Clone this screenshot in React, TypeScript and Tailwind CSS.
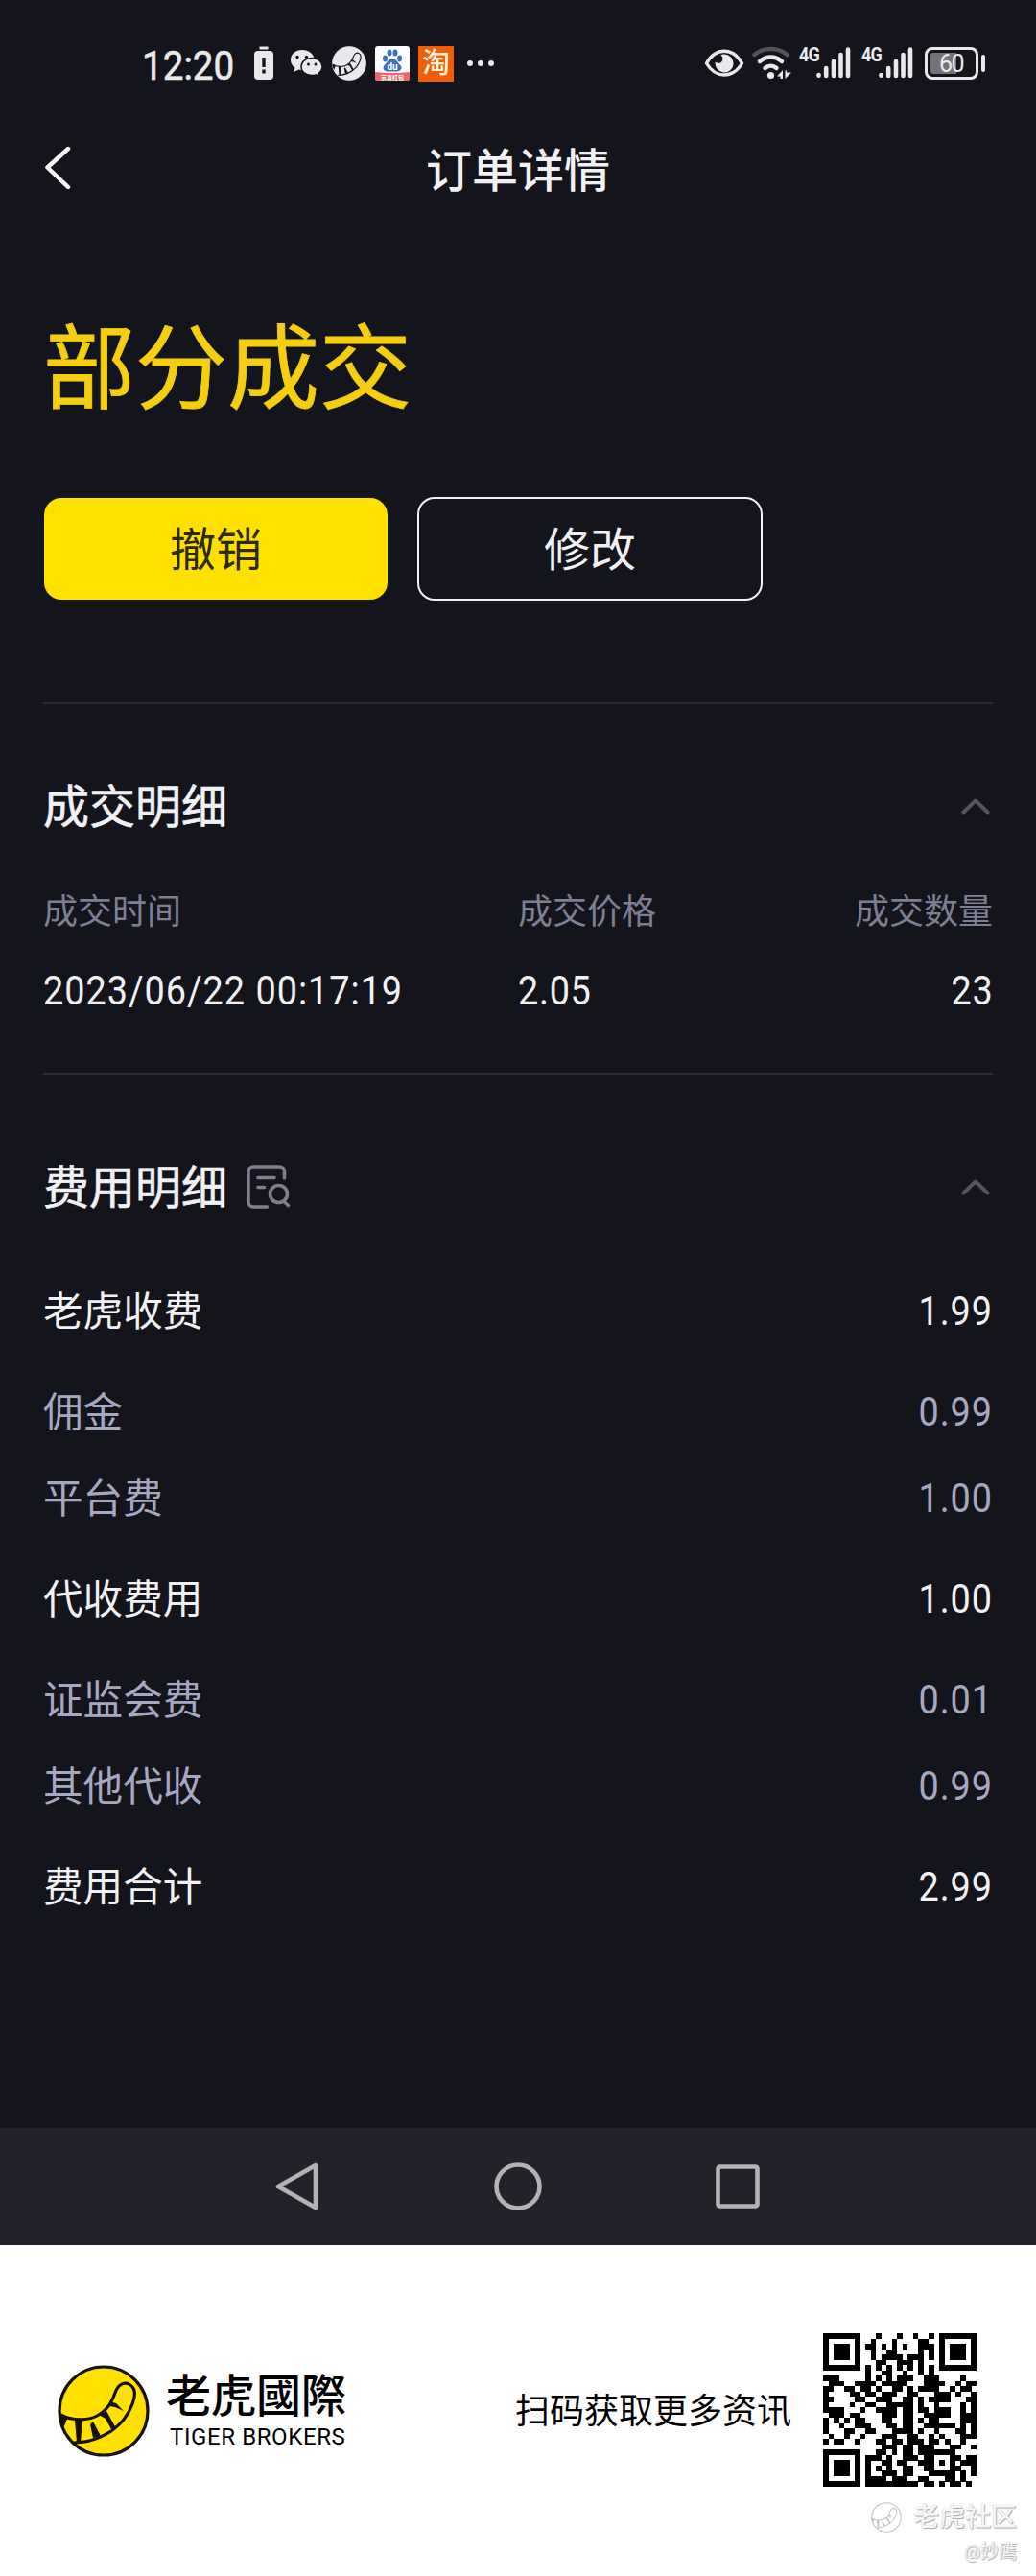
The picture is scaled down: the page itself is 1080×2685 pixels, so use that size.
import React from "react";

const CJK = "font-['Roboto','Noto_Sans_CJK_SC',sans-serif]";

function TigerTail({ size, disc, ink, outline }: { size: number; disc: string; ink: string; outline: string }) {
  return (
    <svg width={size} height={size} viewBox="0 0 96 96" fill="none" className="shrink-0">
      <circle cx="48" cy="48" r="46" fill={disc} stroke={outline} strokeWidth="3.2" />
      <path
        d="M2 52C16 58 32 59 43 52C54 45 57 37 60 29C63 20 70 17 76 21C82 25 81 33 78 41C73 54 66 62 56 69C45 76 32 81 17 81"
        stroke={ink}
        strokeWidth="3.2"
      />
      <path
        d="M1 49L11 54L6 66L2 58ZM18 57L26 57L24 81L20 81ZM37 59L45 74L37 76L34 62ZM43 52L51 48L61 66L57 69L50 56ZM54 38L61 40L69 48L60 44L54 43Z"
        fill={ink}
      />
    </svg>
  );
}

function Signal() {
  return (
    <div className="flex h-[36px] items-start">
      <span className="w-[18px] origin-left scale-x-90 text-[20px] font-bold leading-[18px] tracking-[-1px]">4G</span>
      <svg width="36" height="36" viewBox="0 0 36 36" stroke="#e9e9ec" strokeWidth="4.6" strokeLinecap="round">
        <path d="M2.5 30v.8M10.2 23v8M18 16v15M25.5 9v22M33 3.500v27.500" />
      </svg>
    </div>
  );
}

function StatusBar() {
  return (
    <header className="flex h-[132px] items-center pl-[148px] pr-[53px] text-[#e9e9ec]">
      <span className="w-[117px] pt-[5px] text-[42px] leading-none">
        <span className="inline-block origin-left scale-x-[0.92] [-webkit-text-stroke:0.6px]">12:20</span>
      </span>
      <svg width="20" height="36" viewBox="0 0 20 36" className="mr-[17px]">
        <path d="M5.500 2h9" stroke="#e9e9ec" strokeWidth="3" />
        <rect y="5" width="20" height="30" rx="4" fill="#e9e9ec" />
        <path d="M10 12v10M10 24.500v4" stroke="#14141c" strokeWidth="3.4" />
      </svg>
      <svg width="34" height="30" viewBox="0 0 34 30" className="mr-[10px]">
        <path d="M13 1C6 1 1 5.500 1 11.500c0 3.500 1.500 6 4.500 8L4 24l5.500-2.500c5 1.500 16-1 16-10C25.500 5.500 20 1 13 1Z" fill="#e9e9ec" />
        <path d="M23 9.500c-6.500 0-11 4-11 9s4.500 9 11 9c1.500 0 3-.3 4.200-.7l4.300 2-1.200-3.800c2.500-1.700 3.700-4 3.700-6.500 0-5-4.500-9-11-9Z" fill="#e9e9ec" stroke="#14141c" strokeWidth="1.4" />
        <g fill="#14141c">
          <circle cx="8" cy="8.500" r="1.700" /><circle cx="17.500" cy="8.500" r="1.700" />
          <circle cx="19.500" cy="16" r="1.500" /><circle cx="27" cy="16" r="1.500" />
        </g>
      </svg>
      <TigerTail size={36} disc="#e9e9ec" ink="#14141c" outline="#e9e9ec" />
      <svg width="36" height="36" viewBox="0 0 36 36" className="ml-[9px]">
        <rect width="36" height="36" rx="3" fill="#fff" />
        <g fill="#3f6fc4">
          <ellipse cx="10.500" cy="13" rx="2.500" ry="3.400" /><ellipse cx="15" cy="7" rx="2.500" ry="3.400" />
          <ellipse cx="21" cy="7" rx="2.500" ry="3.400" /><ellipse cx="25.500" cy="13" rx="2.500" ry="3.400" />
          <path d="M18 13c4 0 5 4 8 6.500 3 3 1 7-3 7H13c-4 0-6-4-3-7C13 17 14 13 18 13Z" />
        </g>
        <path d="M0 27Q18 29 36 27V34a2 2 0 0 1-2 2H2a2 2 0 0 1-2-2Z" fill="#e8686c" />
        <text x="18" y="24.500" fontSize="10" fontWeight="700" textAnchor="middle" fill="#fff">du</text>
        <text x="18" y="34.700" fontSize="6" fontWeight="700" textAnchor="middle" fill="#fff">京喜红包</text>
      </svg>
      <span className="ml-[9px] flex size-[37px] items-center justify-center bg-[#f25c05] text-[29px] font-medium leading-none text-[#fff3df]">淘</span>
      <span className="ml-[14px] flex gap-[5px]">
        <i className="size-[6px] rounded-full bg-[#e9e9ec]" />
        <i className="size-[6px] rounded-full bg-[#e9e9ec]" />
        <i className="size-[6px] rounded-full bg-[#e9e9ec]" />
      </span>
      <div className="ml-auto flex items-center">
        <svg width="42" height="30" viewBox="0 0 42 30" className="mr-[8px]">
          <path d="M2.500 15C12-2 30-2 39.500 15C30 31 12 31 2.500 15Z" fill="none" stroke="#e9e9ec" strokeWidth="3.400" strokeLinejoin="round" />
          <path d="M21 5.500a9.500 9.500 0 1 1-9.300 8c2 2 5.500 2 7-.5 1.500-2.500.5-5.500-1.500-6.700 1.200-.5 2.500-.8 3.800-.8Z" fill="#e9e9ec" />
        </svg>
        <svg width="42" height="36" viewBox="0 0 42 36" fill="none" strokeWidth="4.400" strokeLinecap="round" className="mr-[7px]">
          <path d="M2.500 9C12 1 27 1 36.500 9" stroke="#53535b" />
          <path d="M8 16c7-6 16-6 23 0M13.500 23c3.500-3 8.500-3 12 0" stroke="#e9e9ec" />
          <circle cx="19.500" cy="30.500" r="3.600" fill="#e9e9ec" />
          <path d="M26 31.500l6-6.500v9h-2.500v-2.500ZM34.500 34v-8.500h1.500v2h5Z" fill="#e9e9ec" />
        </svg>
        <Signal />
        <div className="w-[11px]" />
        <Signal />
        <div className="ml-[12px] flex h-[34px] w-[56px] items-center rounded-[8px] border-[3.500px] border-[#e9e9ec] p-[3px]">
          <span className="flex h-full w-[27px] items-center rounded-l-[3px] bg-[#73737a] pl-[9px] text-[25px] leading-none tracking-[-1.5px]">60</span>
        </div>
        <span className="ml-[3px] h-[18px] w-[4px] rounded-full bg-[#e9e9ec]" />
      </div>
    </header>
  );
}

function Chevron() {
  return (
    <svg width="30" height="18" viewBox="0 0 30 18" fill="none" className="mr-[3px]">
      <path d="M2.500 15.500L15 3.500L27.500 15.500" stroke="#555560" strokeWidth="4" strokeLinecap="round" strokeLinejoin="round" />
    </svg>
  );
}

const FEES = [
  { label: "老虎收费", value: "1.99", main: true },
  { label: "佣金", value: "0.99", main: false },
  { label: "平台费", value: "1.00", main: false },
  { label: "代收费用", value: "1.00", main: true },
  { label: "证监会费", value: "0.01", main: false },
  { label: "其他代收", value: "0.99", main: false },
  { label: "费用合计", value: "2.99", main: true },
];

const QR = [
  "11111110001000100100101111111",
  "10000010010001000011001000001",
  "10111010110101010011101011101",
  "10111010010011000010101011101",
  "10111010010111101110101011101",
  "10000010001100111010001000001",
  "11111110101010101010101111111",
  "00000000100110010010100000000",
  "11100000101010111001110000100",
  "01110011110111110001111001011",
  "11001101101001101011110010110",
  "10000110110111001100011101001",
  "11000011001110011010111100011",
  "10000100110011111010010000101",
  "11110001001111011011011100101",
  "01110110000111011001111100111",
  "10101011000110011010110000111",
  "10010011100011011001111110101",
  "10001100110001111010010001101",
  "01001001000111001100101000111",
  "10110010001101101110110100100",
  "00110100000111011011100011001",
  "10110010001101011011111110000",
  "00000000111010011101100011011",
  "11111110100110110011101010111",
  "10000010101010011001100011001",
  "10111010100111011000111110101",
  "10111010111101110011000110100",
  "10111010111111111101101011010",
];

// Finder squares occupy three corners of the 29-module grid.
const inFinder = (x: number, y: number) => (x < 8 && y < 8) || (x > 20 && y < 8) || (x < 8 && y > 20);

function Finder({ x, y }: { x: number; y: number }) {
  return (
    <g>
      <rect x={x} y={y} width="7" height="7" fill="#000" />
      <rect x={x + 1} y={y + 1} width="5" height="5" fill="#fff" />
      <rect x={x + 2} y={y + 2} width="3" height="3" fill="#000" />
    </g>
  );
}

function QrCode() {
  return (
    <svg width="160" height="160" viewBox="0 0 29 29" shapeRendering="crispEdges" className="shrink-0">
      {QR.map((row, y) =>
        row.split("").map((cell, x) =>
          cell === "1" && !inFinder(x, y) ? <rect key={`${x}-${y}`} x={x} y={y} width="1.02" height="1.02" fill="#000" /> : null,
        ),
      )}
      <Finder x={0} y={0} />
      <Finder x={22} y={0} />
      <Finder x={0} y={22} />
    </svg>
  );
}

export default function App() {
  return (
    <div className={`flex h-[2685px] w-[1080px] flex-col overflow-hidden bg-[#14141c] text-[#f1f1f3] ${CJK}`}>
      <StatusBar />

      <div className="grid h-[90px] grid-cols-3 items-center px-[46px]">
        <svg width="30" height="46" viewBox="0 0 30 46" fill="none" className="-mt-[5px]">
          <path d="M25 3L3.500 22.500L25 43" stroke="#fff" strokeWidth="4.400" strokeLinecap="round" strokeLinejoin="round" />
        </svg>
        <h1 className="pt-[4px] text-center text-[48px] font-medium leading-none">订单详情</h1>
      </div>

      <main className="px-[45px]">
        <h2 className="pt-[115px] text-[96px] leading-[96px] text-[#f5ce12] [-webkit-text-stroke:0.8px]">部分成交</h2>
        <div className="mt-[85px] flex items-center gap-[31px] pl-px">
          <button className="h-[106px] w-[358px] rounded-[18px] bg-[#ffe100] pt-[3px] text-[48px] leading-none text-[#2e2a12]">撤销</button>
          <button className="h-[108px] w-[360px] rounded-[18px] border-2 border-[#f1f1f3] pt-[3px] text-[48px] leading-none">修改</button>
        </div>

        <section className="mt-[106px] h-[386px] border-t-2 border-[#2b2b34] pt-[76px]">
          <div className="flex h-[60px] items-center justify-between">
            <h3 className="pt-[4px] text-[48px] leading-none [-webkit-text-stroke:0.6px]">成交明细</h3>
            <Chevron />
          </div>
          <div className="mt-[57px] grid grid-cols-[495px_1fr_1fr] text-[36px] leading-[48px] text-[#7e7e94]">
            <span>成交时间</span>
            <span>成交价格</span>
            <span className="text-right">成交数量</span>
          </div>
          <div className="mt-[34px] grid grid-cols-[495px_1fr_1fr] text-[42px] leading-[48px]">
            <span className="origin-left scale-x-90 whitespace-nowrap tracking-[1.1px]">2023/06/22 00:17:19</span>
            <span className="origin-left scale-x-90 tracking-[0.8px]">2.05</span>
            <span className="origin-right scale-x-90 text-right tracking-[0.8px]">23</span>
          </div>
        </section>

        <section className="border-t-2 border-[#2b2b34] pt-[87px]">
          <div className="flex h-[60px] items-center">
            <h3 className="pt-[4px] text-[48px] leading-none [-webkit-text-stroke:0.6px]">费用明细</h3>
            <svg width="46" height="46" viewBox="0 0 46 46" fill="none" stroke="#7e7e90" strokeWidth="3.600" strokeLinecap="round" className="ml-[20px]">
              <path d="M39.500 14V7a5 5 0 0 0-5-5H7a5 5 0 0 0-5 5v32a5 5 0 0 0 5 5h14.500M12 13.500h17M12 23.500h6.500M39 38.500l4.500 4" />
              <circle cx="33.500" cy="30.500" r="9" />
            </svg>
            <div className="ml-auto"><Chevron /></div>
          </div>
          <dl className="mt-[69px] flex flex-col gap-[30px]">
            {FEES.map((fee) => (
              <div
                key={fee.label}
                className={
                  fee.main
                    ? "flex h-[60px] items-center justify-between text-[42px] [&:not(:first-child)]:mt-[15px] [&+div]:mt-[15px]"
                    : "flex h-[60px] items-center justify-between text-[42px] text-[#a7a7c2]"
                }
              >
                <dt className="pt-[3px] text-[41.600px] leading-none">{fee.label}</dt>
                <dd className="origin-right scale-x-90 pt-px leading-none tracking-[1px]">{fee.value}</dd>
              </div>
            ))}
          </dl>
        </section>
      </main>

      <nav className="mt-auto flex h-[122px] shrink-0 items-center justify-center gap-[181px] bg-[#22222a]">
        <svg width="50" height="52" viewBox="0 0 50 52" fill="none" stroke="#b3b3b5" strokeWidth="4.600" strokeLinejoin="round">
          <path d="M46 4L7 26L46 48Z" />
        </svg>
        <svg width="52" height="52" viewBox="0 0 52 52" fill="none" stroke="#b3b3b5" strokeWidth="4.600">
          <circle cx="26" cy="26" r="22.500" />
        </svg>
        <svg width="46" height="46" viewBox="0 0 46 46" fill="none" stroke="#b3b3b5" strokeWidth="4.600" className="-ml-px mr-[5px]">
          <rect x="2.500" y="2.500" width="41" height="41" rx="2" />
        </svg>
      </nav>

      <footer className="relative flex h-[345px] shrink-0 items-start bg-white pl-[60px] pr-[62px] text-black">
        <div className="mt-[125px]">
          <TigerTail size={96} disc="#ffe100" ink="#17110c" outline="#17110c" />
        </div>
        <div className="ml-[17px] mt-[130px]">
          <div className="font-['Roboto','Noto_Sans_CJK_TC',sans-serif] text-[47px] font-medium leading-[56px]">老虎國際</div>
          <div className="ml-[4px] text-[24px] leading-[28px] tracking-[0.6px]">TIGER BROKERS</div>
        </div>
        <div className="ml-auto mt-[92px] flex items-center gap-[33px]">
          <span className="pt-[3px] text-[36px] leading-none">扫码获取更多资讯</span>
          <QrCode />
        </div>
        <div className="absolute right-[20px] bottom-[14px] flex flex-col items-end text-[#f7f7f8] [text-shadow:1px_1px_1px_#a5a5ad,0_0_1px_#b8b8c0]">
          <div className="flex items-center gap-[12px]">
            <TigerTail size={32} disc="#fff" ink="#c4c4ca" outline="#c4c4ca" />
            <span className="text-[27px] font-medium leading-[34px]">老虎社区</span>
          </div>
          <span className="mt-[8px] text-[19px] leading-[22px]">@妙鹰</span>
        </div>
      </footer>
    </div>
  );
}
